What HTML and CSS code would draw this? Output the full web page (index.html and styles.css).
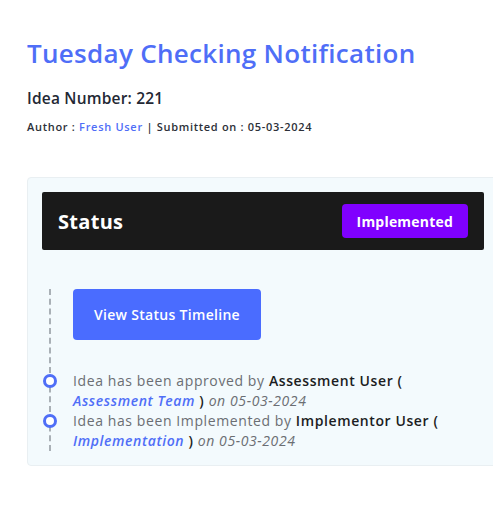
FILE: index.html
```html
<!DOCTYPE html>
<html>
<head>
<meta charset="utf-8">
<link rel="stylesheet" href="styles.css">
</head>
<body>
<div class="page">
  <h1 class="title">Tuesday Checking Notification</h1>
  <h2 class="idea-number">Idea Number: 221</h2>
  <p class="meta">Author : <span class="author">Fresh User</span> | Submitted on : 05-03-2024</p>

  <section class="card">
    <div class="card-header">
      <span class="card-title">Status</span>
      <span class="badge">Implemented</span>
    </div>
    <div class="timeline">
      <div class="timeline-btn-row">
        <button class="btn">View Status Timeline</button>
      </div>
      <div class="timeline-item">
        <span class="dot"></span>
        <p class="item-text">Idea has been approved by <b>Assessment User</b> <span class="paren">(</span> <i class="team">Assessment Team</i> <span class="paren">)</span> <i>on 05-03-2024</i></p>
      </div>
      <div class="timeline-item">
        <span class="dot"></span>
        <p class="item-text">Idea has been Implemented by <b>Implementor User</b> <span class="paren">(</span> <i class="team">Implementation</i> <span class="paren">)</span> <i>on 05-03-2024</i></p>
      </div>
    </div>
  </section>
</div>
</body>
</html>
```

FILE: styles.css
```css
* { box-sizing: border-box; }
html, body { margin: 0; padding: 0; background: #fff; overflow: hidden; }
body {
  font-family: "Open Sans", "Noto Sans", sans-serif;
  color: #1f2430;
}
.page {
  padding: 36px 0 0 27px;
  width: 520px;
}
.title {
  margin: 0;
  font-size: 26px;
  line-height: 34px;
  font-weight: 600;
  color: #4f6ef7;
  letter-spacing: 0.3px;
}
.idea-number {
  margin: 18px 0 0;
  font-size: 15.5px;
  line-height: 20px;
  font-weight: 600;
  color: #232834;
  letter-spacing: 0.2px;
}
.meta {
  margin: 11px 0 0;
  font-size: 11px;
  line-height: 16px;
  font-weight: 600;
  color: #2c3038;
  letter-spacing: 0.7px;
}
.author { color: #4f6ef7; }
.card {
  margin-top: 42px;
  width: 472px;
  background: #f3fafd;
  border: 1px solid #e9eff2;
  border-radius: 4px;
  padding: 14px;
}
.card-header {
  background: #1a1a1a;
  height: 58px;
  border-radius: 2px;
  display: flex;
  align-items: center;
  justify-content: space-between;
  padding: 0 16px;
}
.card-title {
  color: #fff;
  font-size: 20px;
  font-weight: 700;
  letter-spacing: 0.3px;
}
.badge {
  background: #8000ff;
  color: #fff;
  font-size: 14px;
  font-weight: 700;
  border-radius: 4px;
  height: 34px;
  padding: 0 15px;
  display: flex;
  align-items: center;
  letter-spacing: 0.2px;
}
.timeline {
  margin-top: 39px;
  margin-left: 7px;
  border-left: 2px dashed #a9b0b6;
  position: relative;
}
.timeline-btn-row { padding-left: 22px; }
.btn {
  background: #4a6cff;
  color: #fff;
  border: none;
  border-radius: 4px;
  width: 188px;
  height: 51px;
  font-family: inherit;
  font-size: 14px;
  font-weight: 600;
  letter-spacing: 0.3px;
}
.timeline-item {
  position: relative;
  padding-left: 22px;
}
.timeline-btn-row + .timeline-item { margin-top: 31px; }
.dot {
  position: absolute;
  left: -8px;
  top: 3px;
  width: 14px;
  height: 14px;
  border-radius: 50%;
  border: 3px solid #4f6ef7;
  background: #fff;
}
.item-text {
  margin: 0;
  font-size: 14px;
  line-height: 20px;
  color: #6b6e73;
  width: 390px;
  letter-spacing: 0.6px;
}
.item-text b { font-weight: 600; color: #1b1d22; }
.item-text .paren { color: #1b1d22; font-weight: 600; }
.item-text i { font-style: italic; }
.item-text .team { color: #4f6ef7; font-weight: 600; }
```
